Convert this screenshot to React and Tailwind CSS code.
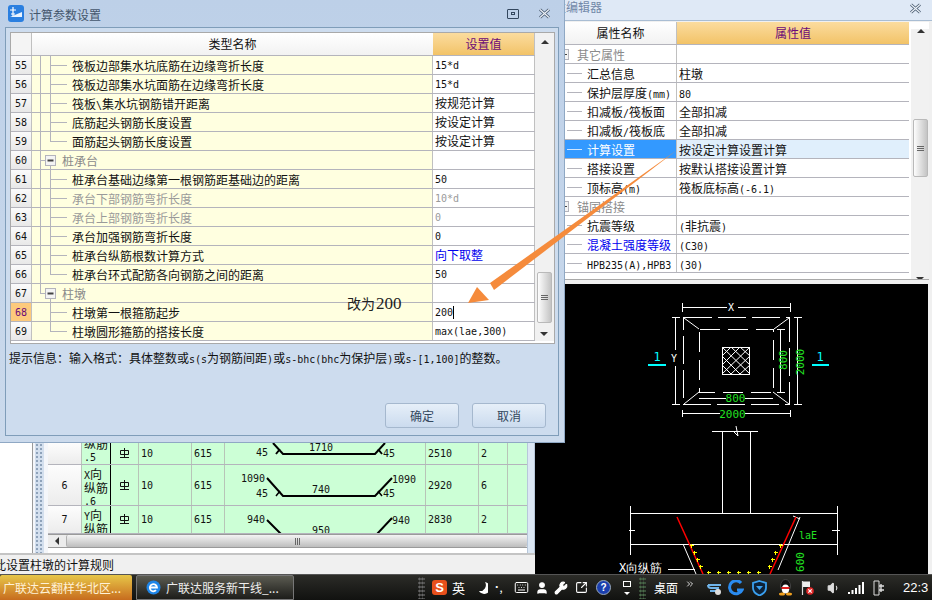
import React from 'react';
import { Keyboard, User, Wrench, SquareArrowOutUpRight, Volume1, ChevronsRight } from 'lucide-react';

const LATIN = "font-['DejaVu_Sans_Mono','Liberation_Mono',monospace] text-[10px]";

// SimSun-style half width latin: the ascii runs get their own mono span
function Txt({ children }) {
  const parts = String(children).split(/([\x00-\x7f]+)/).filter(Boolean);
  return (
    <>
      {parts.map((part, i) =>
        /^[\x00-\x7f]+$/.test(part) ? (
          <span key={i} className={LATIN}>{part}</span>
        ) : (
          <span key={i}>{part}</span>
        )
      )}
    </>
  );
}

const paramRows = [
  { no: 55, name: '筏板边部集水坑底筋在边缘弯折长度', value: '15*d' },
  { no: 56, name: '筏板边部集水坑面筋在边缘弯折长度', value: '15*d' },
  { no: 57, name: '筏板\\集水坑钢筋错开距离', value: '按规范计算' },
  { no: 58, name: '底筋起头钢筋长度设置', value: '按设定计算' },
  { no: 59, name: '面筋起头钢筋长度设置', value: '按设定计算', last: true },
  { no: 60, name: '桩承台', group: true },
  { no: 61, name: '桩承台基础边缘第一根钢筋距基础边的距离', value: '50' },
  { no: 62, name: '承台下部钢筋弯折长度', value: '10*d', muted: true },
  { no: 63, name: '承台上部钢筋弯折长度', value: '0', muted: true },
  { no: 64, name: '承台加强钢筋弯折长度', value: '0' },
  { no: 65, name: '桩承台纵筋根数计算方式', value: '向下取整', link: true },
  { no: 66, name: '桩承台环式配筋各向钢筋之间的距离', value: '50', last: true },
  { no: 67, name: '柱墩', group: true, closing: true },
  { no: 68, name: '柱墩第一根箍筋起步', value: '200', active: true, noOuter: true },
  { no: 69, name: '柱墩圆形箍筋的搭接长度', value: 'max(lae,300)', last: true, noOuter: true },
];

const propRows = [
  { name: '其它属性', group: true },
  { name: '汇总信息', value: '柱墩' },
  { name: '保护层厚度(mm)', value: '80' },
  { name: '扣减板/筏板面', value: '全部扣减' },
  { name: '扣减板/筏板底', value: '全部扣减' },
  { name: '计算设置', value: '按设定计算设置计算', selected: true },
  { name: '搭接设置', value: '按默认搭接设置计算' },
  { name: '顶标高(m)', value: '筏板底标高(-6.1)' },
  { name: '锚固搭接', group: true },
  { name: '抗震等级', value: '(非抗震)' },
  { name: '混凝土强度等级', value: '(C30)', link: true },
  { name: 'HPB235(A),HPB3', value: '(30)' },
];

function CloseMark({ className }) {
  return (
    <svg width="13" height="11" viewBox="0 0 13 11" className={className}>
      <path d="M2 1.5 L11 9.5 M11 1.5 L2 9.5" stroke="#4a5c72" strokeWidth="3" />
      <path d="M2 1.5 L11 9.5 M11 1.5 L2 9.5" stroke="#eef3f9" strokeWidth="1.2" />
    </svg>
  );
}

function TreeLines({ row }) {
  const line = '#b4b4bc';
  return (
    <svg width="40" height="18" className="shrink-0">
      {!row.noOuter && <line x1="8.5" y1="0" x2="8.5" y2={row.closing ? 9 : 18} stroke={line} />}
      {row.group ? (
        <>
          <line x1="8" y1="9.5" x2="13" y2="9.5" stroke={line} />
          <rect x="13.5" y="4.5" width="10" height="10" fill="#f4f4f4" stroke={line} />
          <rect x="15.5" y="8.5" width="6" height="2" fill="#444" />
          <line x1="18.5" y1="15" x2="18.5" y2="18" stroke={line} />
        </>
      ) : (
        <>
          <line x1="18.5" y1="0" x2="18.5" y2={row.last ? 9.5 : 18} stroke={line} />
          <line x1="18" y1="9.5" x2="35" y2="9.5" stroke={line} />
        </>
      )}
    </svg>
  );
}

function ScrollBar({ thumbTop, thumbHeight, height }) {
  return (
    <div className="relative shrink-0 w-[19px] bg-[#f1f1f1]" style={{ height }}>
      <div className="mx-auto mt-[7px] w-0 h-0 border-x-[4px] border-x-transparent border-b-[4px] border-b-[#333]" />
      <div
        className="absolute left-[2px] w-[15px] rounded-[2px] border border-[#b9b9b9] bg-linear-to-r from-[#fdfdfd] to-[#c4c4c4] flex flex-col items-center justify-center gap-[1px]"
        style={{ top: thumbTop, height: thumbHeight }}
      >
        <div className="w-[7px] h-[1px] bg-[#666]" />
        <div className="w-[7px] h-[1px] bg-[#666]" />
        <div className="w-[7px] h-[1px] bg-[#666]" />
      </div>
      <div className="absolute bottom-[5px] left-[5px] w-0 h-0 border-x-[4px] border-x-transparent border-t-[4px] border-t-[#333]" />
    </div>
  );
}

function ParamDialog() {
  return (
    <div className="absolute left-0 top-0 w-[565px] h-[443px] flex flex-col bg-linear-to-b from-[#bdd0e8] to-[#cbdaec] border-r border-b border-[#8fa8c4]">
      <div className="h-[27px] shrink-0 flex items-center pl-[8px] pr-[13px]">
        <svg width="16" height="17" viewBox="0 0 16 17" className="shrink-0">
          <rect width="16" height="17" rx="3" fill="#2a7fe0" />
          <path d="M2 12 L14 7 L14 12 Z" fill="#eaf4ff" />
          <path d="M5 2 V11 M2 5 H8 M3 9 H7" stroke="#fff" strokeWidth="1.2" fill="none" />
        </svg>
        <span className="ml-[5px] pt-[2px] text-[12px] text-[#44566c]">计算参数设置</span>
        <div className="ml-auto mr-[19px] w-[12px] h-[10px] border border-[#33475e] rounded-[1px] flex items-center justify-center">
          <div className="w-[4px] h-[3px] border border-[#33475e]" />
        </div>
        <CloseMark />
      </div>
      <div className="flex-1 ml-[5px] mr-[5px] mb-[6px] border border-[#7f9db9] flex flex-col p-[4px] bg-[#cddcee]">
        <div className="w-[545px] h-[312px] shrink-0 border border-[#a9a9a9] bg-white flex items-start">
          <div className="w-[524px] shrink-0">
            <div className="h-[23px] flex border-b border-[#b4b4bc] text-[12px] text-[#111]">
              <div className="w-[21px] border-r border-[#c0c0c0] bg-[#f4f4f4]" />
              <div className="w-[401px] bg-linear-to-b from-[#ffffff] to-[#f2f2f2] flex items-center justify-center">类型名称</div>
              <div className="w-[102px] border-r border-[#c0c0c0] bg-linear-to-b from-[#fbdc9e] to-[#f2c367] flex items-center justify-center text-[#6b0a78]">设置值</div>
            </div>
            {paramRows.map((row) => (
              <div key={row.no} className="h-[19px] flex border-b border-[#b4b4bc] text-[12px]">
                <div className={`w-[21px] shrink-0 border-r border-[#c0c0c0] flex items-center justify-center ${row.active ? 'bg-[#fdca7c] text-[#6b0a78]' : 'bg-linear-to-b from-[#fbfbfb] to-[#e8e8e8] text-[#111]'}`}>
                  <span className={LATIN}>{row.no}</span>
                </div>
                <div className="w-[401px] shrink-0 bg-[#ffffe0] border-r border-[#c0c0c0] flex items-center">
                  <TreeLines row={row} />
                  <span className={`pt-[2px] ${row.group ? '-ml-[10px] text-[#8a8a8a]' : row.muted ? 'text-[#9a9a9a]' : 'text-[#111]'}`}>
                    <Txt>{row.name}</Txt>
                  </span>
                </div>
                <div className={`w-[102px] shrink-0 border-r border-[#c0c0c0] bg-white pl-[2px] flex items-center ${row.link ? 'text-[#0000ee]' : row.muted ? 'text-[#9a9a9a]' : 'text-[#111]'}`}>
                  {row.value && <Txt>{row.value}</Txt>}
                  {row.active && <div className="w-[1px] h-[13px] bg-black" />}
                </div>
              </div>
            ))}
          </div>
          <ScrollBar thumbTop={239} thumbHeight={51} height={308} />
        </div>
        <div className="mt-[7px] -ml-[1px] text-[12px] leading-[14px] text-[#111] whitespace-nowrap">
          <Txt>{'提示信息\uFF1A输入格式\uFF1A具体整数或s(s为钢筋间距)或s-bhc(bhc为保护层)或s-[1,100]的整数。'}</Txt>
        </div>
        <div className="mt-auto mb-[3px] flex justify-end gap-[13px] pr-[8px]">
          <button className="w-[74px] h-[25px] rounded-[3px] border border-[#a5b8ce] bg-linear-to-b from-[#e6eff9] to-[#cbdbee] text-[12px] text-[#33475e]">确定</button>
          <button className="w-[74px] h-[25px] rounded-[3px] border border-[#a5b8ce] bg-linear-to-b from-[#e6eff9] to-[#cbdbee] text-[12px] text-[#33475e]">取消</button>
        </div>
      </div>
    </div>
  );
}

function SteelMark() {
  return (
    <svg width="11" height="11" viewBox="0 0 11 11">
      <path d="M1.5 2.5 H9.5 V6.5 H1.5 Z M5.5 0 V9.5 M1 9.5 H10" stroke="#111" strokeWidth="1" fill="none" />
    </svg>
  );
}

function BarShape({ top, height, children }) {
  return (
    <svg width="201" height={height} viewBox={`225 ${top} 201 ${height}`} className={`text-[#111] ${LATIN}`}>
      {children}
    </svg>
  );
}

const gridCell = 'shrink-0 border-r border-[#b8c4b8] flex items-center pl-[2px]';

function GridRow({ no, height, label, total, count, top, clipBottom, children }) {
  return (
    <div className="flex shrink-0 border-b border-[#b4b4bc] text-[#111] overflow-hidden" style={{ height }}>
      <div className="w-[34px] shrink-0 border-r border-[#b8c4b8] bg-linear-to-b from-[#fdfdfd] to-[#ececec] flex items-center justify-center">
        {no && <span className={LATIN}>{no}</span>}
      </div>
      <div className={`w-[29px] shrink-0 border-r border-black pl-[2px] flex flex-col text-[12px] leading-[12px] ${clipBottom ? 'justify-end' : 'justify-start pt-[3px]'}`}>
        {label.map((item) => (
          <div key={item}><Txt>{item}</Txt></div>
        ))}
      </div>
      <div className="w-[28px] shrink-0 border-r border-[#b8c4b8] flex items-center justify-center"><SteelMark /></div>
      <div className={`${gridCell} w-[53px]`}><span className={LATIN}>10</span></div>
      <div className={`${gridCell} w-[33px]`}><span className={LATIN}>615</span></div>
      <div className="w-[201px] shrink-0 border-r border-[#b8c4b8]"><BarShape top={top} height={height}>{children}</BarShape></div>
      <div className={`${gridCell} w-[53px]`}><span className={LATIN}>{total}</span></div>
      <div className={`${gridCell} w-[29px]`}><span className={LATIN}>{count}</span></div>
      <div className="flex-1" />
    </div>
  );
}

function RebarGrid() {
  return (
    <div className="w-[479px] h-[105px] flex flex-col shrink-0">
      <div className="h-[91px] flex flex-col overflow-hidden bg-[#ccffd6]">
        <GridRow no="" height={22} label={['纵筋', '.5']} total="2510" count="2" top={443} clipBottom>
          <path d="M273 443 L283 454 H375 L385 443 M276 454 L280 449 M382 454 L378 449" stroke="#000" strokeWidth="2" fill="none" />
          <text x="256" y="456" fill="#111">45</text>
          <text x="309" y="451" fill="#111">1710</text>
          <text x="383" y="457" fill="#111">45</text>
        </GridRow>
        <GridRow height={41} no="6" label={['X向', '纵筋', '.6']} total="2920" count="6" top={465}>
          <path d="M267 478 L283 496 H375 L392 478" stroke="#000" strokeWidth="2" fill="none" />
          <path d="M276 496 L280 491 M382 496 L378 491" stroke="#000" strokeWidth="1.5" fill="none" />
          <text x="241" y="482" fill="#111">1090</text>
          <text x="256" y="497" fill="#111">45</text>
          <text x="312" y="493" fill="#111">740</text>
          <text x="383" y="497" fill="#111">45</text>
          <text x="392" y="483" fill="#111">1090</text>
        </GridRow>
        <GridRow height={28} no="7" label={['Y向', '纵筋']} total="2830" count="2" top={506}>
          <path d="M267 520 L281 534 M377 534 L392 518" stroke="#000" strokeWidth="2" fill="none" />
          <text x="247" y="523" fill="#111">940</text>
          <text x="312" y="534" fill="#111">950</text>
          <text x="392" y="524" fill="#111">940</text>
        </GridRow>
      </div>
      <div className="h-[14px] shrink-0 border-y border-[#9a9a9a] bg-[#ececec] flex items-center">
        <div className="w-[18px] flex justify-center">
          <div className="w-0 h-0 border-y-[4px] border-y-transparent border-r-[4px] border-r-[#333]" />
        </div>
        <div className="flex-1 h-full rounded-[2px] border-l border-[#b0b0b0] bg-linear-to-b from-[#f4f4f4] to-[#bdbdbd] flex items-center justify-center gap-[1px]">
          <div className="w-[1px] h-[7px] bg-[#666]" />
          <div className="w-[1px] h-[7px] bg-[#666]" />
          <div className="w-[1px] h-[7px] bg-[#666]" />
        </div>
      </div>
    </div>
  );
}

function LeftPane() {
  return (
    <div className="w-[535px] shrink-0 flex flex-col justify-end bg-white">
      <div className="flex h-[110px] shrink-0">
        <div className="w-[33px] shrink-0 bg-white border-r border-[#9a9a9a]" />
        <div className="w-[15px] shrink-0 bg-[#f4f6fa] px-[2px]">
          <div className="w-[9px] h-full bg-[#d3dfee] bg-[radial-gradient(#8ea2ba_1px,transparent_1.2px)] bg-[length:4px_4px]" />
        </div>
        <RebarGrid />
        <div className="flex-1 bg-[#dbe7f4] border-x border-[#b7c7da]" />
      </div>
      <div className="h-[21px] shrink-0 border-t-2 border-[#c4c4c4] bg-[#f0f0f0] text-[12px] text-[#111] overflow-hidden flex items-center justify-start whitespace-nowrap">
        <span className="-ml-[6px]">此设置柱墩的计算规则</span>
      </div>
    </div>
  );
}

function PropertyPanel() {
  return (
    <div className="h-[284px] shrink-0 bg-[#f0f0f0] flex flex-col">
      <div className="h-[21px] shrink-0 bg-[#dfe9f6] border-b border-[#a9bdd3] flex items-center pl-[7px] pr-[10px] overflow-hidden">
        <span className="text-[12px] text-[#7288a8] -mt-[6px]">属性编辑器</span>
        <CloseMark className="ml-auto -mt-[3px]" />
      </div>
      <div className="mt-[1px] h-[258px] ml-[30px] mr-[3px] bg-white border-b border-[#a9a9a9] flex items-start overflow-hidden">
        <div className="w-[344px] shrink-0">
          <div className="h-[23px] flex border-b border-[#b4b4bc] text-[12px]">
            <div className="w-[112px] bg-linear-to-b from-[#ffffff] to-[#f2f2f2] border-r border-[#c0c0c0] flex items-center justify-center text-[#111]">属性名称</div>
            <div className="w-[232px] bg-linear-to-b from-[#fbdc9e] to-[#f2c367] flex items-center justify-center text-[#6b0a78]">属性值</div>
          </div>
          {propRows.map((row) => (
            <div key={row.name} className="h-[19px] flex border-b border-[#b4b4bc] text-[12px]">
              <div className={`w-[112px] shrink-0 border-r border-[#c0c0c0] flex items-center overflow-hidden whitespace-nowrap ${row.selected ? 'bg-[#3399ff] text-white' : 'bg-white'}`}>
                {row.group ? (
                  <>
                    <svg width="12" height="18" className="shrink-0">
                      <rect x="-3.5" y="4.5" width="7" height="10" fill="#f4f4f4" stroke="#b4b4bc" />
                      <rect x="0" y="9" width="2" height="1" fill="#444" />
                    </svg>
                    <span className="pt-[2px] text-[#8a8a8a]">{row.name}</span>
                  </>
                ) : (
                  <>
                    <svg width="22" height="18" className="shrink-0">
                      <line x1="2" y1="9.5" x2="17" y2="9.5" stroke={row.selected ? '#cfe6ff' : '#b4b4bc'} />
                    </svg>
                    <span className={`pt-[2px] ${row.link ? 'text-[#0000ee]' : row.selected ? 'text-white' : 'text-[#111]'}`}>
                      <Txt>{row.name}</Txt>
                    </span>
                  </>
                )}
              </div>
              <div className={`w-[232px] shrink-0 pl-[2px] flex items-center text-[#111] ${row.selected ? 'bg-[#e0effc]' : 'bg-white'}`}>
                {row.value && <span className="pt-[2px]"><Txt>{row.value}</Txt></span>}
              </div>
            </div>
          ))}
          <div className="h-[19px]" />
        </div>
        <div className="ml-[2px]"><ScrollBar thumbTop={90} thumbHeight={58} height={257} /></div>
      </div>
    </div>
  );
}

function CadDrawing() {
  const white = { stroke: '#fff', fill: 'none' };
  const green = '#22e022';
  const cad = "font-['DejaVu_Sans_Mono',monospace]";
  return (
    <div className="flex-1 flex bg-black overflow-hidden">
      <svg width="393" height="290" viewBox="535 284 393 290" shapeRendering="crispEdges" className={`shrink-0 ${cad}`}>
        <g {...white}>
          <path d="M682 307.5 H727 M738 307.5 H790 M682.5 303 V312 M790.5 303 V312" />
          <path d="M683.5 317.5 H789.5 V404.5 H683.5 Z" strokeDasharray="28 6" />
          <path d="M699.5 329.5 H773.5 V392.5 H699.5 Z" strokeDasharray="20 8" />
          <g shapeRendering="auto">
            <path d="M684 318 L699 329 M789 318 L774 329 M684 404 L699 392 M789 404 L773 392" />
            <path d="M722 356 L731 347 M722 365 L740 347 M722 374 L750 347 M731 374 L750 356 M740 374 L750 365 M722 356 L740 374 M722 347 L750 374 M731 347 L750 365 M740 347 L750 356 M722 365 L731 374" />
          </g>
          <rect x="722.5" y="347.5" width="27" height="27" strokeWidth="1" />
          <path d="M675.5 317 V350 M675.5 366 V404 M672 317.5 H680 M672 404.5 H680" />
          <path d="M797.5 317 V404 M794 317.5 H802 M794 404.5 H802" />
          <path d="M780.5 329 V392 M777 329.5 H785 M777 392.5 H785" />
          <path d="M699 398.5 H726 M745 398.5 H773 M683 413.5 H720 M745 413.5 H790 M682.5 410 V417 M790.5 410 V417" />
          <path d="M712 431.5 H758 M722.5 431 V513 M750.5 431 V513" />
          <path d="M630 513.5 H837 M630 544.5 H837 M630.5 506 V555 M837.5 506 V555" />
          <path d="M629 530.5 H635 M832 530.5 H840 M733 431 L738 436 L736 426" shapeRendering="auto" />
          <path d="M683 544 L696 574 M800 517 L778 570 M793 516 L800 519 M668 569.5 H695" shapeRendering="auto" />
        </g>
        <text x="728" y="311" fontSize="10" fill="#fff">X</text>
        <text x="671" y="362" fontSize="10" fill="#fff">Y</text>
        <text x="657" y="361" fontSize="12" fill="#00ffff" textAnchor="middle">1</text>
        <text x="820" y="361" fontSize="12" fill="#00ffff" textAnchor="middle">1</text>
        <rect x="648" y="364" width="18" height="2" fill="#00ffff" />
        <rect x="812" y="364" width="17" height="2" fill="#00ffff" />
        <text x="735.5" y="402" fontSize="11" fill={green} textAnchor="middle">800</text>
        <text x="732.5" y="418" fontSize="11" fill={green} textAnchor="middle">2000</text>
        <text transform="translate(787 360) rotate(-90)" fontSize="11" fill={green} textAnchor="middle">800</text>
        <text transform="translate(804 362) rotate(-90)" fontSize="11" fill={green} textAnchor="middle">2000</text>
        <text x="799" y="539" fontSize="10" fill={green}>laE</text>
        <text transform="translate(804 562) rotate(-90)" fontSize="11" fill={green} textAnchor="middle">600</text>
        <text x="619" y="572" fontSize="12" fill="#fff">X向纵筋</text>
        <g shapeRendering="auto" stroke="#f00" strokeWidth="1.5">
          <line x1="677" y1="517" x2="703" y2="574" />
          <line x1="796" y1="517" x2="770" y2="574" />
        </g>
        {[[691, 545], [694, 552], [697, 559], [700, 566], [780, 545], [775, 552], [772, 559], [769, 566], [708, 572], [718, 572], [728, 572], [738, 572], [748, 572], [758, 572]].map(([x, y]) => (
          <path key={`${x}-${y}`} d={`M${x - 1.5} ${y + 0.5} H${x + 2.5} M${x + 0.5} ${y - 1.5} V${y + 2.5}`} stroke="#ffff00" />
        ))}
      </svg>
      <div className="flex-1 bg-[#f0f0f0]" />
    </div>
  );
}

function Taskbar() {
  const tray = 'shrink-0 text-white';
  return (
    <div className="h-[26px] shrink-0 flex items-center bg-linear-to-b from-[#2c2c28] to-[#111210] border-t border-[#555] text-white overflow-hidden">
      <div className="w-[132px] h-full shrink-0 bg-linear-to-b from-[#e6c648] to-[#c66c1e] flex items-center pl-[3px] text-[12px] text-[#fff1d6] whitespace-nowrap rounded-t-[2px]">
        广联达云翻样华北区...
      </div>
      <div className="ml-[4px] w-[158px] h-full shrink-0 bg-linear-to-b from-[#5c5c52] to-[#1d1d1a] border border-[#777] rounded-t-[2px] flex items-center pl-[9px] text-[12px] text-[#eee] whitespace-nowrap">
        <svg width="15" height="15" viewBox="0 0 15 15" className="shrink-0">
          <circle cx="7.5" cy="7.5" r="7" fill="#1f86e8" />
          <path d="M3.5 7.5 H11 A3.6 3.6 0 1 0 10 10.2" stroke="#fff" strokeWidth="1.8" fill="none" />
        </svg>
        <span className="ml-[5px]">广联达服务新干线_...</span>
      </div>
      <div className="ml-[124px] w-[7px] h-[22px] shrink-0 bg-[radial-gradient(#666_1px,transparent_1.2px)] bg-[length:3px_4px]" />
      <div className="ml-[7px] w-[15px] h-[15px] shrink-0 rounded-[3px] bg-[#e8501c] flex items-center justify-center text-[13px] font-bold leading-none text-white font-['Liberation_Sans',sans-serif]">S</div>
      <span className="ml-[5px] text-[13px] shrink-0">英</span>
      <svg width="9" height="12" viewBox="0 0 9 12" className="ml-[14px] shrink-0">
        <path d="M6 0 A6 6 0 1 1 0 9 A6 6 0 0 0 6 0 Z" fill="#fff" />
      </svg>
      <span className="ml-[6px] text-[11px] leading-none shrink-0 w-[10px]">˙,</span>
      <Keyboard size={15} strokeWidth={1.6} className={`ml-[10px] ${tray}`} />
      <User size={14} strokeWidth={2} fill="#fff" className={`ml-[6px] ${tray}`} />
      <Wrench size={14} strokeWidth={2} fill="#fff" className={`ml-[5px] ${tray}`} />
      <SquareArrowOutUpRight size={13} strokeWidth={2} className={`ml-[7px] ${tray}`} />
      <div className="ml-[8px] w-[15px] h-[15px] shrink-0 rounded-full bg-[#1b3fae] border border-[#9ab] flex items-center justify-center text-[10px] font-bold font-['Liberation_Sans',sans-serif]">?</div>
      <div className="ml-[11px] w-[9px] shrink-0 flex flex-col items-center gap-[5px]">
        <div className="w-[8px] h-[6px] border border-white" />
        <div className="w-0 h-0 border-x-[3px] border-x-transparent border-t-[3px] border-t-white" />
      </div>
      <div className="ml-[8px] w-[7px] h-[22px] shrink-0 bg-[radial-gradient(#4a6a4a_1px,transparent_1.2px)] bg-[length:3px_4px]" />
      <span className="ml-[8px] text-[12px] shrink-0">桌面</span>
      <ChevronsRight size={10} strokeWidth={2} className="ml-[7px] -mt-[8px] shrink-0" />
      <svg width="15" height="15" viewBox="0 0 15 15" className="ml-[12px] shrink-0">
        <path d="M1 5 H14 M1 5 A3 3 0 0 0 4 8 H11 A3 3 0 0 1 8 11 H3" stroke="#6fb3e8" strokeWidth="2" fill="none" />
        <circle cx="11" cy="12" r="3" fill="#ddd" />
      </svg>
      <svg width="16" height="16" viewBox="0 0 16 16" className="ml-[6px] shrink-0">
        <path d="M13 3 A6.5 6.5 0 1 0 14 10 H9" stroke="#2a8cf0" strokeWidth="3" fill="none" />
      </svg>
      <svg width="15" height="16" viewBox="0 0 15 16" className="ml-[8px] shrink-0">
        <path d="M7.5 1 L14 3 V8 C14 12 10 14.5 7.5 15.5 C5 14.5 1 12 1 8 V3 Z" stroke="#3aa0f0" strokeWidth="1.8" fill="#0d2238" />
        <path d="M4 6 H11 L7.5 10 Z" fill="#3aa0f0" />
      </svg>
      <svg width="15" height="17" viewBox="0 0 15 17" className="ml-[11px] shrink-0">
        <ellipse cx="7.5" cy="7" rx="5" ry="6.5" fill="#111" stroke="#444" />
        <ellipse cx="7.5" cy="10" rx="3.6" ry="4.5" fill="#fff" />
        <path d="M3 8 H12 L11 10 H4 Z" fill="#e02020" />
        <ellipse cx="4" cy="15" rx="3" ry="1.5" fill="#f0a020" />
        <ellipse cx="11" cy="15" rx="3" ry="1.5" fill="#f0a020" />
      </svg>
      <svg width="13" height="16" viewBox="0 0 13 16" className="ml-[8px] shrink-0">
        <path d="M1.5 1 V15" stroke="#ddd" strokeWidth="1.2" />
        <path d="M2 1.5 H9 V7 H2 Z" fill="#eee" />
        <circle cx="9" cy="11" r="3.8" fill="#e02828" />
        <path d="M7.3 9.3 L10.7 12.7 M10.7 9.3 L7.3 12.7" stroke="#fff" strokeWidth="1.2" />
      </svg>
      <Volume1 size={14} strokeWidth={1.8} fill="#ddd" className="ml-[13px] shrink-0 text-[#ddd]" />
      <svg width="16" height="12" viewBox="0 0 16 12" className="ml-[7px] shrink-0">
        <path d="M0 10 h2 v2 h-2 Z M3.5 8 h2 v4 h-2 Z M7 6 h2 v6 h-2 Z M10.5 3 h2 v9 h-2 Z M14 0 h2 v12 h-2 Z" fill="#fff" />
      </svg>
      <svg width="12" height="16" viewBox="0 0 12 16" className="ml-[9px] shrink-0">
        <path d="M1 1 H6 V15 H1 Z" stroke="#ddd" fill="none" />
        <path d="M6 6 H11 M6 10 H11 M8 4 V12" stroke="#ddd" strokeWidth="1.4" />
      </svg>
      <span className="ml-[18px] shrink-0 whitespace-nowrap font-['Liberation_Sans',sans-serif] text-[13px]">22:3</span>
    </div>
  );
}

export default function App() {
  return (
    <div className="relative w-[932px] h-[600px] overflow-hidden flex flex-col bg-black font-['Noto_Sans_CJK_SC','Liberation_Sans',sans-serif] text-[12px]">
      <div className="flex-1 flex min-h-0">
        <LeftPane />
        <div className="w-[397px] shrink-0 flex flex-col">
          <PropertyPanel />
          <CadDrawing />
        </div>
      </div>
      <Taskbar />
      <ParamDialog />
      {/* callout drawn over the dialog */}
      <svg width="932" height="600" className="absolute left-0 top-0 pointer-events-none">
        <path d="M677 150 L490 283 L494 290 Z" fill="#f58b3c" />
        <path d="M468 303 L477 287 L489 300 Z" fill="#f58b3c" />
      </svg>
      <div className="absolute left-[347px] top-[293px] flex items-baseline gap-[1px] text-[#222] text-[14px] leading-[20px]">
        <span>改为</span>
        <span className="font-['Liberation_Serif',serif] text-[17px]">200</span>
      </div>
    </div>
  );
}
